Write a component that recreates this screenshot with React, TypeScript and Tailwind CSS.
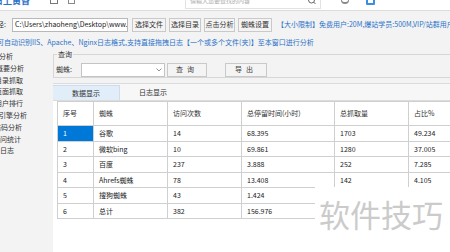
import React from "react";

const rows = [
  ["1", "谷歌", "14", "68.395", "1703", "49.234"],
  ["2", "微软bing", "10", "69.861", "1280", "37.005"],
  ["3", "百度", "237", "3.888", "252", "7.285"],
  ["4", "Ahrefs蜘蛛", "78", "13.408", "142", "4.105"],
  ["5", "搜狗蜘蛛", "43", "1.424", "", ""],
  ["6", "总计", "382", "156.976", "", ""],
];

function Btn({ children, w }: { children: React.ReactNode; w: string }) {
  return (
    <div
      className={`${w} h-[14px] border border-[#c9c9c9] bg-[#f4f4f4] flex items-center justify-center text-[7px] text-[#333] shrink-0`}
    >
      {children}
    </div>
  );
}

export default function App() {
  return (
    <div className="relative w-[450px] h-[252px] overflow-hidden bg-[#f3f3f3] font-['Noto_Sans_CJK_SC',sans-serif] text-[#222]">
      {/* title strip */}
      <div className="h-[11px] bg-white border-b border-[#dcdcdc] flex items-start relative">
        <div className="mt-[-5px] text-[9px] font-bold text-[#2a72c8] leading-[12px] whitespace-nowrap -ml-[6px]">
          日上黄昏
        </div>
        <div className="ml-[20px] mt-[-3px] w-[8px] h-[7px] border border-[#777]" />
        <div className="ml-[10px] mt-[-3px] w-[7px] h-[7px] border border-[#888]" />
        <div className="ml-[110px] w-[136px] h-[9px] bg-white border-x border-b border-[#e2e2e2] flex items-start justify-between px-[4px]">
          <span className="text-[6px] leading-[6px] text-[#aaa] mt-[-2px] whitespace-nowrap">请输入您要查找的内容</span>
          <svg width="8" height="6" viewBox="0 0 8 6" className="mt-[-1px]">
            <circle cx="3.5" cy="1" r="3" fill="none" stroke="#666" strokeWidth="1" />
            <line x1="5.5" y1="3" x2="7.5" y2="5" stroke="#666" strokeWidth="1" />
          </svg>
        </div>
        <div className="ml-[20px] mt-[-2px] w-[8px] h-[6px] border-b-2 border-x border-[#888] rounded-b" />
        <div className="ml-[17px] mt-[-3px] w-[9px] h-[8px] border-2 border-[#3a8de0] rounded-[1px]" />
      </div>

      {/* toolbar */}
      <div className="h-[25px] flex items-center pt-[2px]">
        <span className="text-[7px] text-[#333] -ml-[3px] w-[14px] whitespace-nowrap shrink-0">径:</span>
        <div className="ml-[1px] w-[116px] h-[14px] bg-white border border-[#b8b8b8] flex items-center px-[2px] overflow-hidden shrink-0">
          <span className="text-[7px] text-[#222] whitespace-nowrap">C:\Users\zhaoheng\Desktop\www.p</span>
        </div>
        <div className="ml-[4px] flex items-center gap-[3px]">
          <Btn w="w-[34px]">选择文件</Btn>
          <Btn w="w-[32px]">选择目录</Btn>
          <Btn w="w-[31px]">点击分析</Btn>
          <Btn w="w-[34px]">蜘蛛设置</Btn>
        </div>
        <span className="ml-[5px] text-[7px] text-[#2a72c8] whitespace-nowrap">
          【大小限制】免费用户:20M,爆站学员:500M,VIP/站群用户:无
        </span>
      </div>

      {/* info line */}
      <div className="h-[13px] flex items-center">
        <span className="-ml-[3px] text-[7px] text-[#2a72c8] whitespace-nowrap">
          可自动识别IIS、Apache、Nginx日志格式,支持直接拖拽日志【一个或多个文件(夹)】至本窗口进行分析
        </span>
      </div>

      {/* body */}
      <div className="flex">
        {/* sidebar */}
        <div className="w-[53px] shrink-0 overflow-hidden pt-[2px] text-[7px] text-[#333] flex flex-col">
          <div className="h-[11.8px] leading-[11.8px] -ml-[15px] whitespace-nowrap">蜘蛛分析</div>
          <div className="h-[11.8px] leading-[11.8px] -ml-[4px] whitespace-nowrap">概要分析</div>
          <div className="h-[11.8px] leading-[11.8px] -ml-[5px] whitespace-nowrap">目录抓取</div>
          <div className="h-[11.8px] leading-[11.8px] -ml-[5px] whitespace-nowrap">页面抓取</div>
          <div className="h-[11.8px] leading-[11.8px] -ml-[5px] whitespace-nowrap">用户排行</div>
          <div className="h-[11.8px] leading-[11.8px] -ml-[15px] whitespace-nowrap">搜索引擎分析</div>
          <div className="h-[11.8px] leading-[11.8px] -ml-[13px] whitespace-nowrap">状态码分析</div>
          <div className="h-[11.8px] leading-[11.8px] -ml-[7px] whitespace-nowrap">访问统计</div>
          <div className="h-[11.8px] leading-[11.8px] -ml-[14px] whitespace-nowrap">蜘蛛日志</div>
        </div>

        {/* main */}
        <div className="flex-1 flex flex-col">
          {/* group box */}
          <div className="mt-[5px] h-[24px] border-t border-l border-b border-[#d6d6d6] relative flex items-center pt-[7px] pl-[2px]">
            <span className="absolute left-[3px] top-[-6px] bg-[#f3f3f3] px-[1px] text-[7px] leading-[10px] text-[#333]">查询</span>
            <span className="text-[7px] text-[#333] w-[25px]">蜘蛛:</span>
            <div className="w-[84px] h-[14px] bg-white border border-[#c4c4c4] flex items-center justify-end pr-[2px]">
              <svg width="6" height="4" viewBox="0 0 6 4">
                <path d="M0.5 0.5 L3 3 L5.5 0.5" fill="none" stroke="#777" strokeWidth="0.8" />
              </svg>
            </div>
            <div className="ml-[2px] w-[40px] h-[14px] border border-[#c9c9c9] bg-[#f4f4f4] flex items-center justify-center text-[7px] text-[#444] tracking-[4px]">查询</div>
            <div className="ml-[18px] w-[42px] h-[14px] border border-[#c9c9c9] bg-[#f4f4f4] flex items-center justify-center text-[7px] text-[#444] tracking-[4px]">导出</div>
          </div>

          {/* tabs */}
          <div className="mt-[5px] h-[18px] border-t border-b border-[#dcdcdc] bg-[#f7f7f7] flex items-end">
            <div className="w-[67px] h-[15px] bg-[#e1edf9] border-t border-r border-[#d0dced] flex items-center justify-center text-[7px] text-[#333]">数据显示</div>
            <div className="ml-[19px] h-[15px] flex items-center text-[7px] text-[#333]">日志显示</div>
          </div>

          {/* table panel */}
          <div className="bg-white h-[160px] pl-[4px]">
            <table className="border-collapse text-[7px] text-[#222] table-fixed w-[450px]">
              <colgroup>
                <col className="w-[36px]" />
                <col className="w-[74px]" />
                <col className="w-[74px]" />
                <col className="w-[93px]" />
                <col className="w-[74px]" />
                <col className="w-[99px]" />
              </colgroup>
              <thead>
                <tr className="h-[24px]">
                  {["序号", "蜘蛛", "访问次数", "总停留时间(小时)", "总抓取量", "占比%"].map((h) => (
                    <th key={h} className="border border-[#cfcfcf] font-normal text-left pl-[5px] text-[#333]">
                      {h}
                    </th>
                  ))}
                </tr>
              </thead>
              <tbody>
                {rows.map((r, i) => (
                  <tr key={i} className="h-[15.5px]">
                    {r.map((c, j) => (
                      <td
                        key={j}
                        className={`border border-[#cfcfcf] pl-[5px] leading-[10px] ${
                          i === 0 && j === 0 ? "bg-[#0078d7] text-white" : ""
                        }`}
                      >
                        {c}
                      </td>
                    ))}
                  </tr>
                ))}
              </tbody>
            </table>
          </div>
        </div>
      </div>

      {/* watermark */}
      <div className="absolute left-[315px] top-[187px] right-0 bottom-0 bg-white flex items-start justify-start pl-[4px] pt-[11px]">
        <span className="text-[31px] leading-[32px] text-[#cbcbcb] whitespace-nowrap tracking-[0px]">软件技巧</span>
      </div>
    </div>
  );
}
